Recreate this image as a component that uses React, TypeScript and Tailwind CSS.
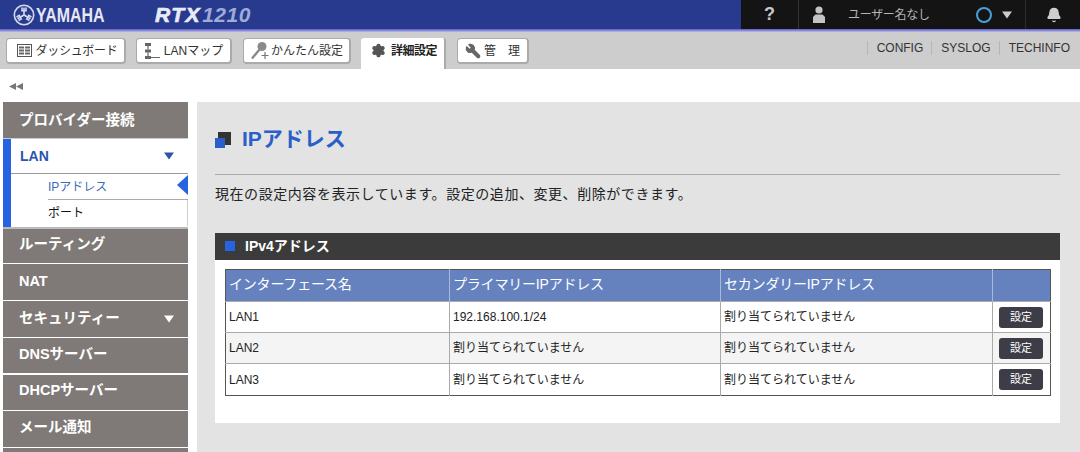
import { Bell, Settings, Wrench } from "lucide-react";
import type { ReactNode } from "react";

const FONT = "font-['Liberation_Sans','Noto_Sans_CJK_JP',sans-serif]";

function Caret({ className }: { className: string }) {
  return (
    <svg width="10" height="8" viewBox="0 0 10 8" className={className}>
      <path d="M0 0.5h10L5 7.5z" fill="currentColor" />
    </svg>
  );
}

function YamahaMark() {
  return (
    <svg width="22" height="22" viewBox="0 0 22 22" className="shrink-0 text-[#d5d9ee]">
      <circle cx="11" cy="11" r="9.7" fill="none" stroke="currentColor" strokeWidth="1.6" />
      <g stroke="currentColor" strokeWidth="1.6" fill="none">
        <path d="M11 11V3.5M9 3.5v3.2h4V3.5" />
        <path d="M11 11V3.5M9 3.5v3.2h4V3.5" transform="rotate(120 11 11)" />
        <path d="M11 11V3.5M9 3.5v3.2h4V3.5" transform="rotate(240 11 11)" />
      </g>
    </svg>
  );
}

function PersonIcon() {
  return (
    <svg width="12" height="18" viewBox="0 0 12 18" className="ml-[14px] text-[#c4c4c4]">
      <circle cx="6" cy="4" r="3.600" fill="currentColor" />
      <path d="M2.500 8.500h7L12 11v6H0v-6z" fill="currentColor" />
    </svg>
  );
}

function DashIcon() {
  return (
    <svg width="15" height="13" viewBox="0 0 15 13" className="mr-[4px]">
      <rect x="0.5" y="0.5" width="14" height="12" fill="none" stroke="#555" />
      <path d="M2 2.5h5v2H2zM2 5.5h5v2H2zM2 8.5h5v2H2zM8 2.5h5v2H8zM8 5.5h5v2H8zM8 8.5h5v2H8z" fill="#666" />
    </svg>
  );
}

function LanIcon() {
  return (
    <svg width="16" height="18" viewBox="0 0 16 18" className="mr-[4px]">
      <path d="M1 1h6v3H1zM1 7.5h6v3H1zM1 14h6v3H1z" fill="#666" />
      <path d="M4 4v3.5M4 10.500v3.500M7 15.500h9" stroke="#666" strokeWidth="1.200" fill="none" />
    </svg>
  );
}

function WizardIcon() {
  return (
    <svg width="20" height="20" viewBox="0 0 20 20" className="mr-[1px]">
      <circle cx="12" cy="5.500" r="4.500" fill="#8a8a8a" />
      <path d="M9.500 8.500L2 17.500" stroke="#8a8a8a" strokeWidth="2.400" />
      <path d="M15 11v7M11.500 14.500h7" stroke="#777" strokeWidth="1.200" />
    </svg>
  );
}

function TabButton({ icon, label, className }: { icon: ReactNode; label: string; className: string }) {
  return (
    <div className={`flex h-[26px] items-center justify-center rounded-[4px] border border-[#aaa] border-r-2 border-b-2 bg-white text-[12px] text-[#333] ${className}`}>
      {icon}
      {label}
    </div>
  );
}

function TopLink({ label }: { label: string }) {
  return <span className="border-l border-[#b5b5b5] pl-[9px] pr-[8px] leading-[14px] last:pr-0">{label}</span>;
}

function NavItem({ label, caret, className }: { label: string; caret?: boolean; className: string }) {
  return (
    <div className={`flex items-center justify-between bg-[#7f7a78] pl-[16px] pr-[14px] text-[14.5px] font-bold text-white ${className}`}>
      {label}
      {caret && <Caret className="text-white" />}
    </div>
  );
}

const rows = [
  { name: "LAN1", primary: "192.168.100.1/24", bg: "bg-white" },
  { name: "LAN2", primary: "割り当てられていません", bg: "bg-[#f4f4f4]" },
  { name: "LAN3", primary: "割り当てられていません", bg: "bg-white" },
];

export default function App() {
  return (
    <div className={`${FONT} h-[452px] w-[1080px] overflow-hidden bg-white`}>
      {/* header */}
      <header className="flex h-[29px] items-stretch justify-between bg-[#283a8e]">
        <div className="flex items-center">
          <div className="ml-[13px] flex w-[92px] items-center">
            <YamahaMark />
            <span className="ml-[1px] origin-left scale-x-[0.76] text-[21px] font-bold text-[#e6e8f4]">YAMAHA</span>
          </div>
          <span className="ml-[50px] text-[21px] font-bold italic tracking-[1.5px] text-[#e9ebf7] [-webkit-text-stroke:0.7px_#e9ebf7]">RTX</span>
          <span className="ml-[1px] text-[21px] font-bold italic tracking-[0.5px] text-[#9fabd8]">1210</span>
        </div>
        <div className="flex w-[339px] items-center bg-[#141414] text-[#cfcfcf]">
          <div className="flex h-full w-[58px] items-center justify-center border-r border-[#333]">
            <span className="text-[18px] font-bold text-[#c8c8c8]">?</span>
          </div>
          <PersonIcon />
          <span className="ml-[23px] text-[12px] tracking-[-0.3px] text-[#b5b5b5]">ユーザー名なし</span>
          <span className="ml-[46px] h-[16px] w-[16px] rounded-full border-2 border-[#4a9fd6]" />
          <Caret className="ml-[10px] text-[#ccc]" />
          <div className="ml-[13px] flex h-full flex-1 items-center justify-center border-l border-[#2c2c2c]">
            <Bell size={16} fill="currentColor" className="ml-[2px]" />
          </div>
        </div>
      </header>
      <div className="h-[3px] bg-gradient-to-b from-[#5b56c8] to-[#bdbbe4]" />

      {/* tab bar */}
      <nav className="flex h-[37px] items-start justify-between bg-[#cdcdcd] pl-[6px] pr-[10px] pt-[6px]">
        <div className="flex items-start">
          <TabButton icon={<DashIcon />} label="ダッシュボード" className="w-[120px] pl-[3px] tracking-[-0.3px]" />
          <TabButton icon={<LanIcon />} label="LANマップ" className="ml-[10px] w-[96px]" />
          <TabButton icon={<WizardIcon />} label="かんたん設定" className="ml-[11px] w-[108px]" />
          <div className="ml-[10px] flex h-[31px] w-[85px] items-center justify-center rounded-t-[3px] border-r-2 border-[#aaa] bg-white pb-[6px] pl-[3px] text-[12px] font-bold tracking-[-0.5px] text-[#222]">
            <Settings size={15} fill="#555" className="mr-[5px] text-[#555]" />
            詳細設定
          </div>
          <TabButton
            icon={<Wrench size={16} fill="#666" className="mr-[3px] -scale-x-100 text-[#666]" />}
            label="管　理"
            className="ml-[11px] w-[72px]"
          />
        </div>
        <div className="mt-[3px] flex text-[12px] text-[#333]">
          <TopLink label="CONFIG" />
          <TopLink label="SYSLOG" />
          <TopLink label="TECHINFO" />
        </div>
      </nav>

      {/* collapse row */}
      <div className="flex h-[33px] items-start pl-[9px] pt-[14px]">
        <svg width="14" height="7" viewBox="0 0 14 7">
          <path d="M7 0v7L0 3.500zM14 0v7L7 3.500z" fill="#777" />
        </svg>
      </div>

      <div className="flex items-start pl-[3px]">
        {/* sidebar */}
        <aside className="flex w-[185px] shrink-0 flex-col">
          <NavItem label="プロバイダー接続" className="h-[37px] border-b border-[#ccc] pt-[1px]" />
          <div className="h-[88px] border-l-[8px] border-[#2563e0] bg-white">
            <div className="flex h-[35px] items-center justify-between border-b border-[#999] pl-[9px] pr-[14px] text-[14px] font-bold text-[#2a55ab]">
              LAN
              <Caret className="text-[#2a55ab]" />
            </div>
            <div className="relative ml-[37px] flex h-[26px] items-center border-b border-[#aaa] text-[12px] text-[#3f6cb5]">
              IPアドレス
              <svg width="11" height="20" viewBox="0 0 11 20" className="absolute right-0 top-[1px]">
                <path d="M11 0v20L0 10z" fill="#2563e0" />
              </svg>
            </div>
            <div className="ml-[37px] flex h-[26px] items-center border-r border-[#ccc] text-[12px] text-[#111]">ポート</div>
          </div>
          <NavItem label="ルーティング" className="h-[36px] border-t-2 border-[#bbb] pb-[2px]" />
          <NavItem label="NAT" className="mt-px h-[36px]" />
          <NavItem label="セキュリティー" caret className="mt-px h-[36px] pb-[1px]" />
          <NavItem label="DNSサーバー" className="mt-px h-[35px] pb-[1px]" />
          <NavItem label="DHCPサーバー" className="mt-[2px] h-[35px] pb-[4px]" />
          <NavItem label="メール通知" className="mt-px h-[36px] pb-[2px]" />
          <NavItem label="" className="mt-px h-[36px]" />
        </aside>

        {/* main */}
        <main className="ml-[9px] h-[350px] min-w-0 flex-1 bg-[#e3e3e3] pl-[18px] pr-[20px]">
          <div className="flex h-[73px] items-end border-b border-[#aaa] pb-[20px]">
            <div className="relative mb-[6px] h-[16px] w-[16px]">
              <span className="absolute right-0 top-0 h-[13px] w-[13px] bg-[#333]" />
              <span className="absolute bottom-0 left-0 h-[10px] w-[10px] bg-[#2a5fc9]" />
            </div>
            <h1 className="ml-[11px] text-[21px] font-bold leading-[30px] text-[#2a5fc9]">IPアドレス</h1>
          </div>
          <p className="mt-[11px] text-[14px] leading-[16px] tracking-[0.56px] text-[#222]">現在の設定内容を表示しています。設定の追加、変更、削除ができます。</p>

          <section className="mt-[31px]">
            <div className="flex h-[27px] items-center bg-[#3b3b3b] pb-[1px] pl-[10px] text-[14px] font-bold text-white">
              <span className="mr-[10px] h-[10px] w-[10px] bg-[#2563e0]" />
              IPv4アドレス
            </div>
            <div className="bg-white px-[10px] pb-[27px] pt-[9px]">
              <table className="w-[825px] table-fixed border-collapse border border-[#555] text-[12px] text-[#222]">
                <colgroup>
                  <col className="w-[224px]" />
                  <col className="w-[271px]" />
                  <col className="w-[272px]" />
                  <col className="w-[58px]" />
                </colgroup>
                <thead>
                  <tr className="h-[32px] bg-[#6582bf] text-left text-[14px] font-normal tracking-[-0.2px] text-white">
                    <th className="border-r border-[#a9b9dc] pb-[2px] pl-[3px] font-normal">インターフェース名</th>
                    <th className="border-r border-[#a9b9dc] pb-[2px] pl-[3px] font-normal">プライマリーIPアドレス</th>
                    <th className="border-r border-[#a9b9dc] pb-[2px] pl-[3px] font-normal">セカンダリーIPアドレス</th>
                    <th />
                  </tr>
                </thead>
                <tbody>
                  {rows.map((row) => (
                    <tr key={row.name} className={`h-[31px] border-t border-[#aaa] last:h-[32px] ${row.bg}`}>
                      <td className="border-r border-[#aaa] pl-[3px]">{row.name}</td>
                      <td className="border-r border-[#aaa] pl-[3px]">{row.primary}</td>
                      <td className="border-r border-[#aaa] pl-[3px]">割り当てられていません</td>
                      <td>
                        <div className="ml-[6px] flex h-[21px] w-[44px] items-center justify-center rounded-[3px] bg-[#3c3d46] text-[11px] text-white">設定</div>
                      </td>
                    </tr>
                  ))}
                </tbody>
              </table>
            </div>
          </section>
        </main>
      </div>
    </div>
  );
}
